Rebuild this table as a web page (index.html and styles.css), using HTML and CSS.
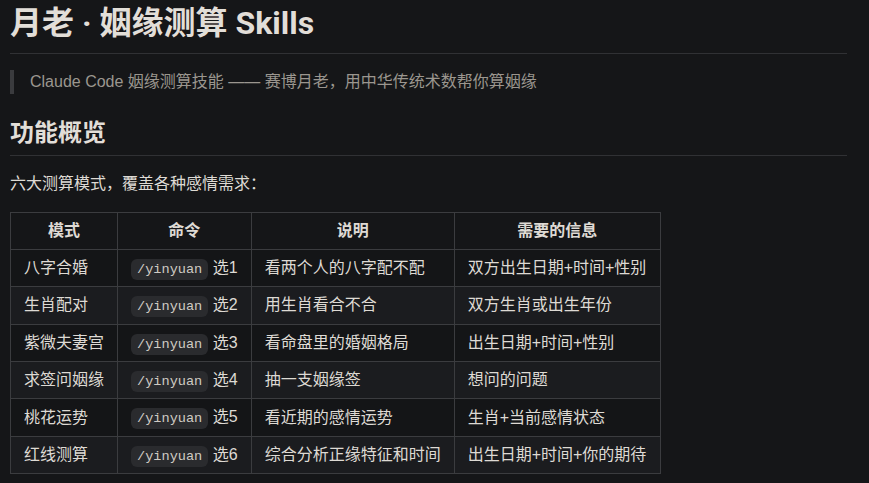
FILE: index.html
```html
<!DOCTYPE html>
<html lang="zh-CN">
<head>
<meta charset="utf-8">
<title>月老 · 姻缘测算 Skills</title>
<link rel="stylesheet" href="styles.css">
</head>
<body>
<article class="markdown">
  <h1 class="title">月老 · 姻缘测算 Skills</h1>
  <blockquote class="quote"><p>Claude Code 姻缘测算技能 —— 赛博月老，用中华传统术数帮你算姻缘</p></blockquote>
  <h2 class="section">功能概览</h2>
  <p class="para">六大测算模式，覆盖各种感情需求：</p>
  <table class="modes">
    <colgroup>
      <col class="c1"><col class="c2"><col class="c3"><col class="c4">
    </colgroup>
    <thead>
      <tr><th>模式</th><th>命令</th><th>说明</th><th>需要的信息</th></tr>
    </thead>
    <tbody>
      <tr><td>八字合婚</td><td><code>/yinyuan</code> 选1</td><td>看两个人的八字配不配</td><td>双方出生日期+时间+性别</td></tr>
      <tr><td>生肖配对</td><td><code>/yinyuan</code> 选2</td><td>用生肖看合不合</td><td>双方生肖或出生年份</td></tr>
      <tr><td>紫微夫妻宫</td><td><code>/yinyuan</code> 选3</td><td>看命盘里的婚姻格局</td><td>出生日期+时间+性别</td></tr>
      <tr><td>求签问姻缘</td><td><code>/yinyuan</code> 选4</td><td>抽一支姻缘签</td><td>想问的问题</td></tr>
      <tr><td>桃花运势</td><td><code>/yinyuan</code> 选5</td><td>看近期的感情运势</td><td>生肖+当前感情状态</td></tr>
      <tr><td>红线测算</td><td><code>/yinyuan</code> 选6</td><td>综合分析正缘特征和时间</td><td>出生日期+时间+你的期待</td></tr>
    </tbody>
  </table>
</article>
</body>
</html>
```

FILE: styles.css
```css
html, body {
  margin: 0;
  padding: 0;
  background: #151618;
}
body {
  color: #dedad4;
  font-family: "Liberation Sans", "Noto Sans CJK SC", sans-serif;
  font-size: 16px;
  line-height: 1.5;
}
.markdown {
  padding: 3px 22px 0 10px;
}
.title {
  margin: 0 0 16px;
  padding-bottom: 9.6px;
  font-family: Roboto, "Noto Sans CJK SC", sans-serif;
  font-size: 32px;
  line-height: 40px;
  font-weight: 700;
  border-bottom: 1px solid #303134;
  color: #e2ded8;
}
.quote {
  margin: 0;
  padding: 0 16px;
  border-left: 4px solid #3a3b3e;
  color: #9b968f;
}
.quote p {
  margin: 0;
}
.section {
  margin: 24px 0 16px;
  padding-bottom: 7.2px;
  font-size: 24px;
  line-height: 30px;
  font-weight: 700;
  border-bottom: 1px solid #303134;
  color: #e2ded8;
}
.para {
  margin: 0 0 16px;
}
.modes {
  border-collapse: collapse;
  border-spacing: 0;
}
.modes .c1 { width: 106px; }
.modes .c2 { width: 133px; }
.modes .c3 { width: 203px; }
.modes .c4 { width: 206px; }
.modes th,
.modes td {
  border: 1px solid #3b3c3f;
  padding: 6px 13px;
  text-align: left;
  white-space: nowrap;
}
.modes th {
  text-align: center;
  font-weight: 700;
}
.modes tbody tr:nth-child(2n) {
  background: #1b1c1f;
}
.modes tbody tr:nth-child(2n+1) {
  background: #141517;
}
code {
  font-family: "Liberation Mono", monospace;
  font-size: 13.6px;
  background: #2a2b2e;
  color: #cfcac3;
  padding: 3px 6px;
  border-radius: 6px;
}
```
